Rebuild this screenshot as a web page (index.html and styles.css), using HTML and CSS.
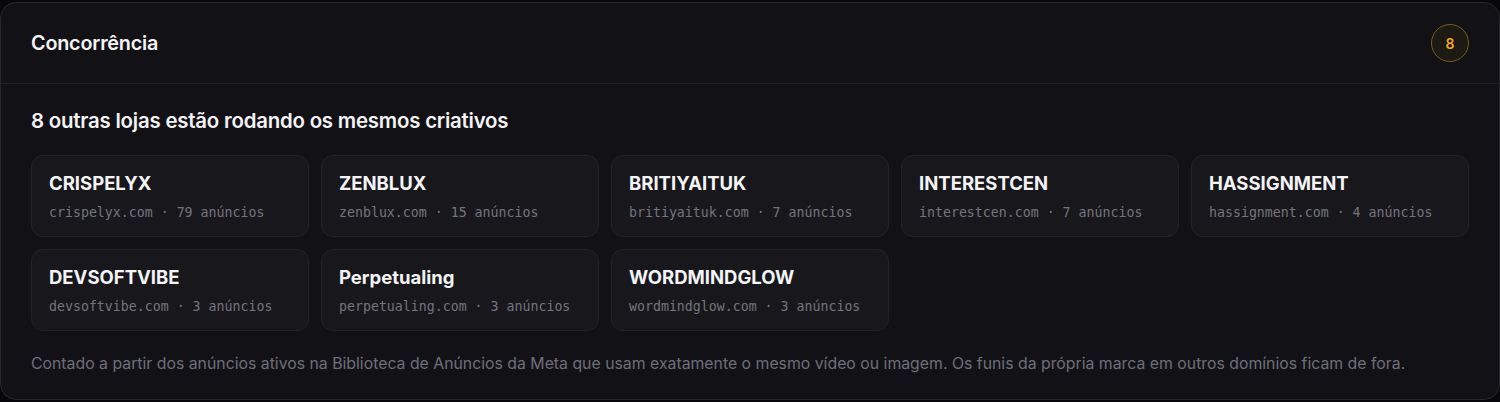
FILE: index.html
```html
<!DOCTYPE html>
<html lang="pt-BR">
<head>
    <meta charset="UTF-8">
    <meta name="viewport" content="width=device-width, initial-scale=1.0">
    <title>Concorrência</title>
    <link rel="stylesheet" href="styles.css">
</head>
<body>
    <section class="panel">
        <header class="panel-header">
            <h2 class="panel-title">Concorrência</h2>
            <span class="badge">8</span>
        </header>
        <div class="panel-body">
            <h3 class="summary">8 outras lojas estão rodando os mesmos criativos</h3>
            <div class="stores">
                <div class="store">
                    <div class="store-name">CRISPELYX</div>
                    <div class="store-meta">crispelyx.com · 79 anúncios</div>
                </div>
                <div class="store">
                    <div class="store-name">ZENBLUX</div>
                    <div class="store-meta">zenblux.com · 15 anúncios</div>
                </div>
                <div class="store">
                    <div class="store-name">BRITIYAITUK</div>
                    <div class="store-meta">britiyaituk.com · 7 anúncios</div>
                </div>
                <div class="store">
                    <div class="store-name">INTERESTCEN</div>
                    <div class="store-meta">interestcen.com · 7 anúncios</div>
                </div>
                <div class="store">
                    <div class="store-name">HASSIGNMENT</div>
                    <div class="store-meta">hassignment.com · 4 anúncios</div>
                </div>
                <div class="store">
                    <div class="store-name">DEVSOFTVIBE</div>
                    <div class="store-meta">devsoftvibe.com · 3 anúncios</div>
                </div>
                <div class="store">
                    <div class="store-name">Perpetualing</div>
                    <div class="store-meta">perpetualing.com · 3 anúncios</div>
                </div>
                <div class="store">
                    <div class="store-name">WORDMINDGLOW</div>
                    <div class="store-meta">wordmindglow.com · 3 anúncios</div>
                </div>
            </div>
            <p class="note">Contado a partir dos anúncios ativos na Biblioteca de Anúncios da Meta que usam exatamente o mesmo vídeo ou imagem. Os funis da própria marca em outros domínios ficam de fora.</p>
        </div>
    </section>
</body>
</html>
```

FILE: styles.css
```css
body {
    margin: 0;
    padding-top: 2px;
    background-color: #08080a;
    font-family: Inter, "Noto Sans", sans-serif;
    color: #f4f4f6;
}

.panel {
    height: 398px;
    box-sizing: border-box;
    background-color: #121216;
    border: 1px solid #26262c;
    border-radius: 16px;
}

.panel-header {
    display: flex;
    justify-content: space-between;
    align-items: center;
    height: 80px;
    padding: 0 30px;
    border-bottom: 1px solid #1f1f25;
}

.panel-title {
    margin: 0;
    font-size: 19.8px;
    font-weight: 600;
    letter-spacing: -0.2px;
}

.badge {
    display: flex;
    justify-content: center;
    align-items: center;
    width: 36px;
    height: 36px;
    border: 1px solid #7a5a1c;
    border-radius: 50%;
    background-color: #1d1a14;
    color: #f5a524;
    font-size: 14px;
    font-weight: 600;
}

.panel-body {
    padding: 24px 30px 0;
}

.summary {
    margin: 0 0 22px;
    font-size: 20.4px;
    font-weight: 600;
    letter-spacing: -0.2px;
}

.stores {
    display: grid;
    grid-template-columns: repeat(5, 278px);
    gap: 12px;
}

.store {
    height: 82px;
    box-sizing: border-box;
    padding: 15px 17px 0;
    background-color: #18181c;
    border: 1px solid #222228;
    border-radius: 12px;
}

.store-name {
    font-size: 18.5px;
    font-weight: 700;
    line-height: 24px;
}

.store-meta {
    margin-top: 10px;
    font-family: "DejaVu Sans Mono", "Liberation Mono", monospace;
    font-size: 13.25px;
    color: #74747d;
}

.note {
    margin: 23px 0 0;
    font-size: 15.82px;
    color: #6e6e7a;
}
```
